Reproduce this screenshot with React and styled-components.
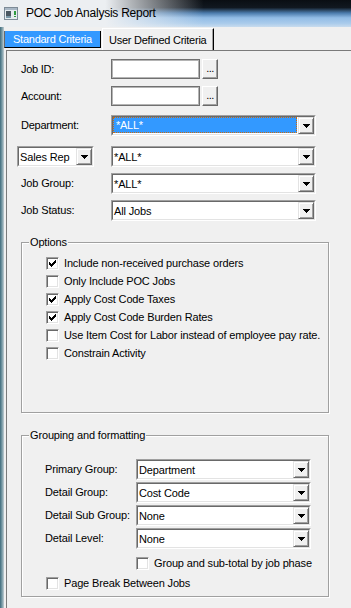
import React from 'react';
import styled, { createGlobalStyle } from 'styled-components';

const FONT = `"Liberation Sans", Arial, sans-serif`;

const GlobalStyle = createGlobalStyle`
  html, body { margin: 0; padding: 0; background: #f0f0f0; overflow: hidden; }
  body { font-family: ${FONT}; color: #000; }
  * { box-sizing: border-box; }
`;

const Window = styled.div`
  width: 351px;
  height: 608px;
  overflow: hidden;
  display: flex;
  flex-direction: column;
  background: #f0f0f0;
`;

const TitleBar = styled.div`
  height: 27px;
  flex: none;
  display: flex;
  align-items: center;
  gap: 8px;
  padding: 0 0 1px 4px;
  background:
    linear-gradient(to right, #eceff2 0%, #eceff2 30%, rgba(236, 239, 242, 0) 58%),
    linear-gradient(to bottom, #0a0e13 0%, #111820 28%, #4a7aab 48%, #92bce6 66%, #a9cbeb 86%, #c8dcee 100%);
`;

const TitleText = styled.span`
  font-size: 12px;
  letter-spacing: -0.25px;
  line-height: 14px;
  color: #000;
`;

const Body = styled.div`
  flex: 1;
  display: flex;
  min-height: 0;
`;

const FrameEdge = styled.div`
  width: 4px;
  flex: none;
  background:
    linear-gradient(to right, #3f6b7c 0%, #7e9ea9 55%, #c3ced3 100%);
`;

const Client = styled.div`
  flex: 1;
  display: flex;
  flex-direction: column;
  min-width: 0;
`;

const TabStrip = styled.div`
  height: 23px;
  flex: none;
  display: flex;
  align-items: flex-start;
`;

const Tab = styled.div`
  display: flex;
  align-items: center;
  font-size: 11px;
  letter-spacing: -0.25px;
  white-space: nowrap;
  ${(p) =>
    p.$active
      ? `
    margin-top: 4px;
    height: 17px;
    width: 97px;
    padding-left: 8px;
    background: #3399ff;
    color: #fff;
    border-left: 1px solid #6a6a6a;
    border-right: 1px solid #000;
    border-bottom: 1px solid #000;
  `
      : `
    margin-top: 1px;
    margin-left: 1px;
    height: 22px;
    width: 112px;
    padding-left: 6px;
    background: #f0f0f0;
    color: #000;
    border-top: 1px solid #fff;
    border-left: 1px solid #fff;
    border-right: 1px solid #000;
    box-shadow: inset -1px 0 0 #a0a0a0;
  `}
`;

const Panel = styled.div`
  flex: 1;
  margin-left: 2px;
  border-top: 1px solid #7a7a7a;
  border-left: 1px solid #7a7a7a;
  padding: 8px 0 0 14px;
  display: flex;
  flex-direction: column;
`;

const FormRow = styled.div`
  display: grid;
  grid-template-columns: ${(p) => p.$labelW || 90}px auto;
  align-items: center;
  height: ${(p) => p.$h || 21}px;
  margin-top: ${(p) => p.$mt || 0}px;
`;

const Label = styled.span`
  font-size: 11px;
  letter-spacing: ${(p) => (p.$classic ? '-0.15px' : '-0.25px')};
  line-height: 13px;
  white-space: nowrap;
  color: #000;
`;

const InputGroup = styled.div`
  display: flex;
  align-items: center;
`;

const TextBox = styled.div`
  width: 89px;
  height: 20px;
  background: #fff;
  border: 1px solid #707070;
  box-shadow: inset 0 0 0 1px #b4b4b4;
`;

const EllipsisButton = styled.div`
  width: 16px;
  height: 20px;
  margin-left: 2px;
  display: flex;
  align-items: flex-end;
  justify-content: center;
  padding-bottom: 3px;
  font-size: 11px;
  line-height: 13px;
  letter-spacing: -0.5px;
  background: #f0f0f0;
  border: 1px solid;
  border-color: #fff #696969 #696969 #fff;
  box-shadow: inset -1px -1px 0 #a0a0a0;
`;

const ComboOuter = styled.div`
  width: ${(p) => p.$w}px;
  height: 21px;
  margin-left: ${(p) => p.$ml || 0}px;
  border: 1px solid;
  border-color: #a0a0a0 #fff #fff #a0a0a0;
`;

const ComboInner = styled.div`
  height: 100%;
  display: flex;
  background: #fff;
  border: 1px solid;
  border-color: #696969 #e3e3e3 #e3e3e3 #696969;
`;

const ComboValue = styled.div`
  flex: 1;
  min-width: 0;
  display: flex;
  align-items: center;
  padding-left: 1px;
  font-size: 11px;
  letter-spacing: -0.15px;
  white-space: nowrap;
  overflow: hidden;
`;

const ComboSelection = styled.div`
  flex: 1;
  min-width: 0;
  margin: 0 1px 1px 0;
  display: flex;
  align-items: center;
  padding-left: 2px;
  background: #3399ff;
  border: 1px dotted #c86a10;
  color: #fff;
  font-size: 11px;
  letter-spacing: -0.25px;
  white-space: nowrap;
`;

const DropButton = styled.div`
  width: 16px;
  flex: none;
  display: flex;
  align-items: center;
  justify-content: center;
  background: #f0f0f0;
  border: 1px solid;
  border-color: #e3e3e3 #696969 #696969 #e3e3e3;
  box-shadow: inset 1px 1px 0 #fff, inset -1px -1px 0 #a0a0a0;
`;

const DownArrow = () => (
  <svg width="7" height="4" viewBox="0 0 7 4" shapeRendering="crispEdges">
    <rect x="0" y="0" width="7" height="1" fill="#000" />
    <rect x="1" y="1" width="5" height="1" fill="#000" />
    <rect x="2" y="2" width="3" height="1" fill="#000" />
    <rect x="3" y="3" width="1" height="1" fill="#000" />
  </svg>
);

function Combo({ width, value, focused, ml }) {
  return (
    <ComboOuter $w={width} $ml={ml}>
      <ComboInner>
        {focused ? <ComboSelection>{value}</ComboSelection> : <ComboValue>{value}</ComboValue>}
        <DropButton>
          <DownArrow />
        </DropButton>
      </ComboInner>
    </ComboOuter>
  );
}

const GroupBox = styled.fieldset`
  width: 308px;
  margin: ${(p) => p.$mt || 0}px 0 0 0;
  padding: 0;
  min-width: 0;
  border: 1px solid #a0a0a0;
  box-shadow: inset 1px 1px 0 #fff, 1px 1px 0 #fff;
`;

const GroupLegend = styled.legend`
  margin-left: 7px;
  padding: 0 1px;
  background: #f0f0f0;
  font-size: 11px;
  letter-spacing: -0.15px;
  line-height: 13px;
  position: relative;
`;

const GroupBody = styled.div`
  display: flex;
  flex-direction: column;
  padding: ${(p) => p.$pad};
`;

const CheckRow = styled.label`
  display: flex;
  align-items: center;
  gap: 5px;
  height: 18px;
  margin-left: ${(p) => p.$ml || 0}px;
  margin-top: ${(p) => p.$mt || 0}px;
`;

const CheckBoxBox = styled.span`
  width: 13px;
  height: 13px;
  flex: none;
  display: flex;
  align-items: center;
  justify-content: center;
  background: #fff;
  border: 1px solid;
  border-color: #a0a0a0 #fff #fff #a0a0a0;
  box-shadow: inset 1px 1px 0 #696969, inset -1px -1px 0 #e3e3e3;
`;

const CheckMark = () => (
  <svg width="7" height="7" viewBox="0 0 7 7" shapeRendering="crispEdges">
    <rect x="6" y="0" width="1" height="1" fill="#000" />
    <rect x="5" y="1" width="2" height="1" fill="#000" />
    <rect x="0" y="2" width="1" height="1" fill="#000" />
    <rect x="4" y="2" width="3" height="1" fill="#000" />
    <rect x="0" y="3" width="2" height="1" fill="#000" />
    <rect x="3" y="3" width="3" height="1" fill="#000" />
    <rect x="0" y="4" width="5" height="1" fill="#000" />
    <rect x="1" y="5" width="3" height="1" fill="#000" />
    <rect x="2" y="6" width="1" height="1" fill="#000" />
  </svg>
);

function Check({ checked, children, ml, mt }) {
  return (
    <CheckRow $ml={ml} $mt={mt}>
      <CheckBoxBox>{checked && <CheckMark />}</CheckBoxBox>
      <Label $classic>{children}</Label>
    </CheckRow>
  );
}

const AppIcon = () => (
  <svg width="14" height="13" viewBox="0 0 14 13" shapeRendering="crispEdges">
    <rect x="0.5" y="0.5" width="13" height="12" fill="#e6ebef" stroke="#7d8b97" />
    <rect x="1" y="1" width="12" height="2" fill="#a9b8c6" />
    <rect x="2" y="4" width="5" height="5" fill="#4b5761" />
    <rect x="2" y="9" width="5" height="2" fill="#7a98a8" />
    <rect x="10" y="4" width="2" height="4" fill="#2f9a3f" />
    <rect x="10" y="9" width="2" height="1" fill="#2f9a3f" />
  </svg>
);

export default function App() {
  return (
    <>
      <GlobalStyle />
      <Window>
        <TitleBar>
          <AppIcon />
          <TitleText>POC Job Analysis Report</TitleText>
        </TitleBar>
        <Body>
          <FrameEdge />
          <Client>
            <TabStrip>
              <Tab $active>Standard Criteria</Tab>
              <Tab>User Defined Criteria</Tab>
            </TabStrip>
            <Panel>
              <FormRow $h={20}>
                <Label>Job ID:</Label>
                <InputGroup>
                  <TextBox />
                  <EllipsisButton>...</EllipsisButton>
                </InputGroup>
              </FormRow>
              <FormRow $h={20} $mt={7}>
                <Label>Account:</Label>
                <InputGroup>
                  <TextBox />
                  <EllipsisButton>...</EllipsisButton>
                </InputGroup>
              </FormRow>
              <FormRow $mt={9}>
                <Label>Department:</Label>
                <Combo width={205} value="*ALL*" focused />
              </FormRow>
              <FormRow $mt={10}>
                <Combo width={77} value="Sales Rep" ml={-4} />
                <Combo width={205} value="*ALL*" />
              </FormRow>
              <FormRow $mt={6}>
                <Label $classic>Job Group:</Label>
                <Combo width={205} value="*ALL*" />
              </FormRow>
              <FormRow $mt={6}>
                <Label $classic>Job Status:</Label>
                <Combo width={205} value="All Jobs" />
              </FormRow>

              <GroupBox $mt={15}>
                <GroupLegend>Options</GroupLegend>
                <GroupBody $pad="5px 0 50px 24px">
                  <Check checked>Include non-received purchase orders</Check>
                  <Check>Only Include POC Jobs</Check>
                  <Check checked>Apply Cost Code Taxes</Check>
                  <Check checked>Apply Cost Code Burden Rates</Check>
                  <Check>Use Item Cost for Labor instead of employee pay rate.</Check>
                  <Check>Constrain Activity</Check>
                </GroupBody>
              </GroupBox>

              <GroupBox $mt={16}>
                <GroupLegend>Grouping and formatting</GroupLegend>
                <GroupBody $pad="17px 0 4px 23px">
                  <FormRow $labelW={91}>
                    <Label $classic>Primary Group:</Label>
                    <Combo width={175} value="Department" />
                  </FormRow>
                  <FormRow $labelW={91} $mt={2}>
                    <Label $classic>Detail Group:</Label>
                    <Combo width={175} value="Cost Code" />
                  </FormRow>
                  <FormRow $labelW={91} $mt={2}>
                    <Label $classic>Detail Sub Group:</Label>
                    <Combo width={175} value="None" />
                  </FormRow>
                  <FormRow $labelW={91} $mt={2}>
                    <Label $classic>Detail Level:</Label>
                    <Combo width={175} value="None" />
                  </FormRow>
                  <Check ml={91} mt={5}>Group and sub-total by job phase</Check>
                  <Check ml={1} mt={2}>Page Break Between Jobs</Check>
                </GroupBody>
              </GroupBox>
            </Panel>
          </Client>
        </Body>
      </Window>
    </>
  );
}
